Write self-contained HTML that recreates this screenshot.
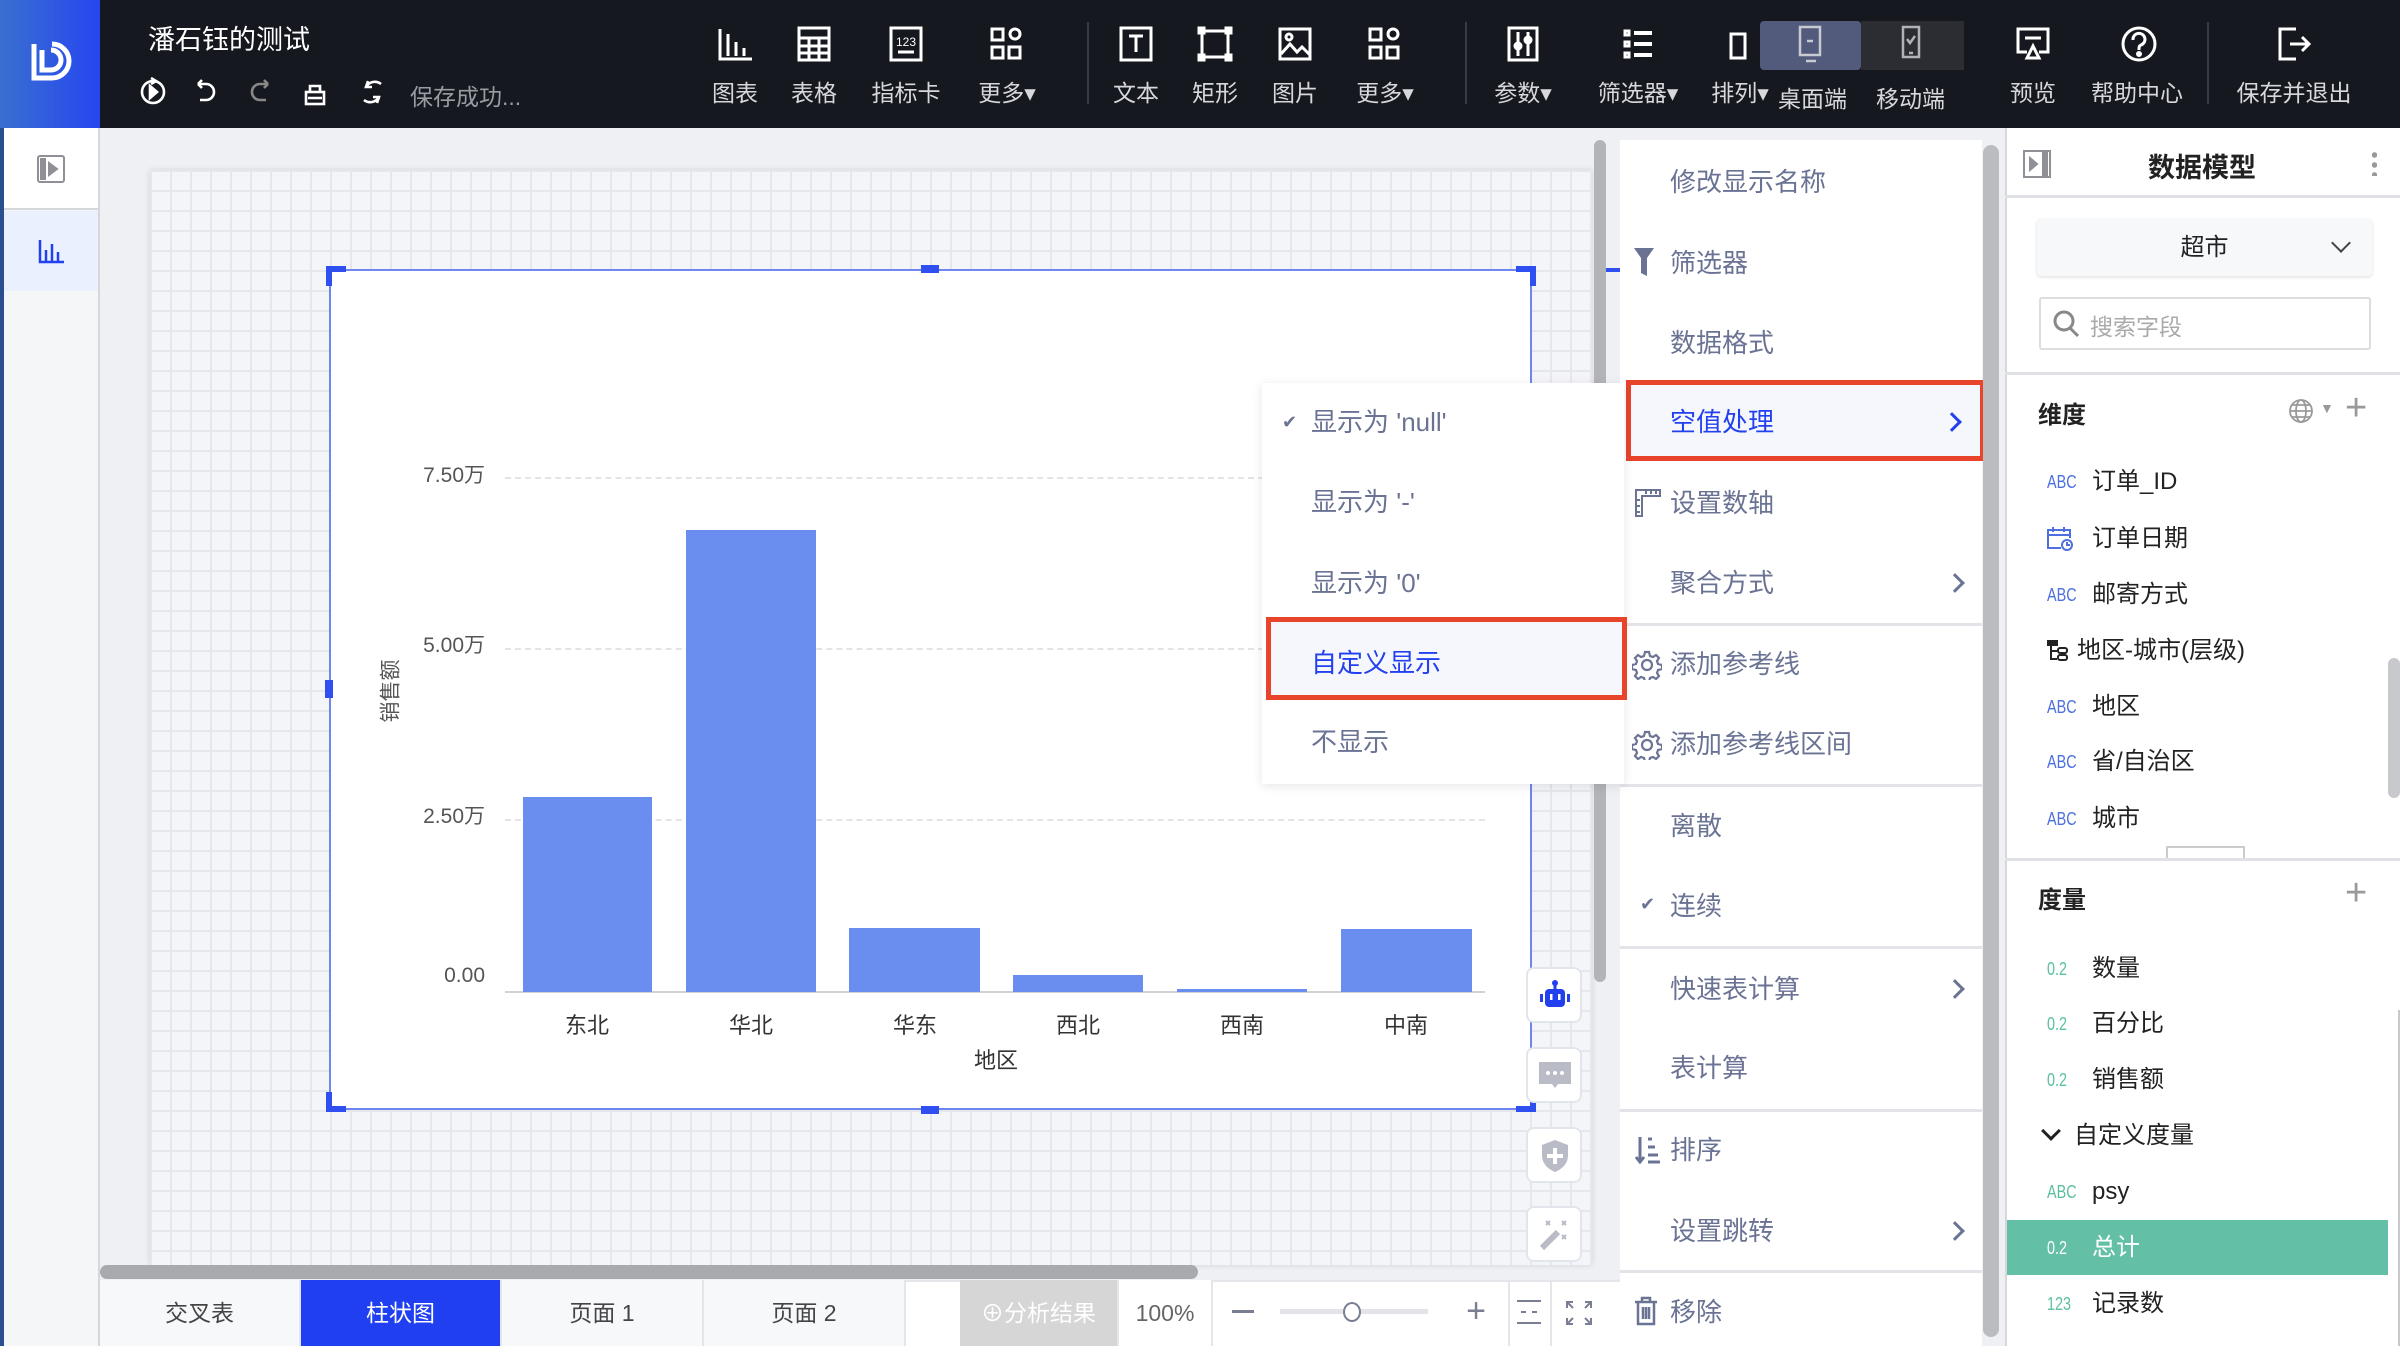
<!DOCTYPE html>
<html><head><meta charset="utf-8">
<style>
*{box-sizing:border-box;margin:0;padding:0}
body{width:2400px;height:1346px;overflow:hidden;position:relative;background:#eef0f4;font-family:"Liberation Sans","Noto Sans CJK SC",sans-serif}
.a{position:absolute}
.top{left:0;top:0;width:2400px;height:128px;background:#16181f}
.logo{left:0;top:0;width:100px;height:128px;background:linear-gradient(90deg,#3a6fd0,#2646f0)}
.tb{position:absolute;top:0;width:120px;margin-left:-60px;text-align:center;color:#d7d8dc;font-size:23px}
.tb svg{position:absolute;left:42px;top:26px}
.tb span{position:absolute;left:0;right:0;top:74px;white-space:nowrap}
.div{position:absolute;top:22px;width:2px;height:82px;background:#3a3c44}
.mi{position:absolute;left:1670px;font-size:26px;color:#6b7394;line-height:30px}
.hr{position:absolute;left:1620px;width:362px;height:3px;background:#e3e4e8}
.chev{position:absolute;left:1948px;width:14px;height:14px;border-right:3px solid #6b7394;border-top:3px solid #6b7394;transform:rotate(45deg)}
.si{position:absolute;left:1311px;font-size:26px;color:#6b7394;line-height:30px;z-index:5}
.ri{position:absolute;left:2092px;font-size:24px;color:#222;line-height:30px}
.ic{position:absolute;left:2047px;font-size:18px;color:#4d6fe0;line-height:30px;transform:scaleX(.8);transform-origin:left}
.icg{color:#5cc09e}
.yl{position:absolute;width:100px;left:385px;text-align:right;font-size:21px;color:#555;line-height:24px}
.xl{position:absolute;width:120px;text-align:center;font-size:22px;color:#333;top:1008px}
.bar{position:absolute;background:#6a8eef;bottom:354px}
.gl{position:absolute;left:505px;width:980px;border-top:2px dashed #e2e4e8}
.h{position:absolute;width:12px;height:12px;background:#2f4ff0}
.fb{position:absolute;left:1526px;width:56px;height:56px;background:#fff;border:2px solid #e3e5ec;border-radius:8px}
.tab{position:absolute;top:1280px;height:66px;line-height:66px;text-align:center;font-size:23px;color:#444;background:#f7f8fa;border-right:2px solid #e5e6ea}
</style></head><body>
<div class="a top"></div>
<div class="a logo"><svg class="a" style="left:28px;top:40px" width="44" height="44" viewBox="0 0 44 44" fill="none" stroke="#fff" stroke-width="5"><path d="M6 4v34h18a17 17 0 0 0 0-34"/><path d="M14 10v20h9a10 10 0 0 0 0-20"/></svg></div>
<div class="a" style="left:148px;top:18px;color:#fff;font-size:27px">潘石钰的测试</div>
<svg class="a" style="left:138px;top:74px" width="260" height="36" viewBox="0 0 260 36" fill="none" stroke="#fff" stroke-width="2.6">
<circle cx="15" cy="18" r="11"/><path d="M12 12l7 6-7 6z" fill="#fff"/><path d="M13 4l5 3-5 3"/>
<path d="M60 10h8a8 8 0 0 1 0 16h-6M60 10l4-4M60 10l4 4"/>
<path d="M130 10h-8a8 8 0 0 0 0 16h6M130 10l-4-4M130 10l-4 4" stroke="#888"/>
<rect x="168" y="18" width="18" height="12"/><path d="M172 18v-6h10v6M170 24h14"/>
<path d="M243 10a10 10 0 0 0-15 3M226 26a10 10 0 0 0 15-3M230 7l-2 6 6 0M239 29l2-6-6 0"/></svg>
<div class="a" style="left:410px;top:78px;color:#9a9ca3;font-size:23px">保存成功...</div>

<div class="tb" style="left:735px"><svg width="36" height="36" viewBox="0 0 36 36" fill="none" stroke="#fff" stroke-width="3"><path d="M3 3v30h32M11 8v22M19 16v14M27 22v8"/></svg><span>图表</span></div>
<div class="tb" style="left:814px"><svg width="36" height="36" viewBox="0 0 36 36" fill="none" stroke="#fff" stroke-width="3"><rect x="3" y="2" width="30" height="32"/><path d="M3 12h30M3 20h30M3 27h30M13 12v22M23 12v22"/></svg><span>表格</span></div>
<div class="tb" style="left:906px"><svg width="36" height="36" viewBox="0 0 36 36" fill="none" stroke="#fff" stroke-width="3"><rect x="3" y="2" width="30" height="32"/><path d="M10 26h16"/><text x="18" y="20" font-size="12" fill="#fff" stroke="none" text-anchor="middle" font-family="Liberation Sans">123</text></svg><span>指标卡</span></div>
<div class="tb" style="left:1007px"><svg width="36" height="36" viewBox="0 0 36 36" fill="none" stroke="#fff" stroke-width="3"><rect x="3" y="3" width="11" height="11"/><circle cx="26" cy="8" r="5"/><rect x="3" y="21" width="11" height="11"/><rect x="20" y="21" width="11" height="11"/></svg><span>更多▾</span></div>
<div class="div" style="left:1087px"></div>
<div class="tb" style="left:1136px"><svg width="36" height="36" viewBox="0 0 36 36" fill="none" stroke="#fff" stroke-width="3"><rect x="3" y="2" width="30" height="32"/><path d="M11 10h14M18 10v16"/></svg><span>文本</span></div>
<div class="tb" style="left:1215px"><svg width="36" height="36" viewBox="0 0 36 36" fill="none" stroke="#fff" stroke-width="3"><rect x="5" y="5" width="26" height="26"/><rect x="2" y="2" width="5" height="5"/><rect x="29" y="2" width="5" height="5"/><rect x="2" y="29" width="5" height="5"/><rect x="29" y="29" width="5" height="5"/></svg><span>矩形</span></div>
<div class="tb" style="left:1295px"><svg width="36" height="36" viewBox="0 0 36 36" fill="none" stroke="#fff" stroke-width="3"><rect x="3" y="3" width="30" height="30"/><path d="M4 28l9-10 7 8 5-5 8 8"/><circle cx="12" cy="11" r="3"/></svg><span>图片</span></div>
<div class="tb" style="left:1385px"><svg width="36" height="36" viewBox="0 0 36 36" fill="none" stroke="#fff" stroke-width="3"><rect x="3" y="3" width="11" height="11"/><circle cx="26" cy="8" r="5"/><rect x="3" y="21" width="11" height="11"/><rect x="20" y="21" width="11" height="11"/></svg><span>更多▾</span></div>
<div class="div" style="left:1465px"></div>
<div class="tb" style="left:1523px"><svg width="36" height="36" viewBox="0 0 36 36" fill="none" stroke="#fff" stroke-width="3"><rect x="4" y="2" width="28" height="32"/><path d="M13 6v24M23 6v24"/><circle cx="13" cy="20" r="3"/><circle cx="23" cy="14" r="3"/></svg><span>参数▾</span></div>
<div class="tb" style="left:1638px"><svg width="36" height="36" viewBox="0 0 36 36" fill="none" stroke="#fff" stroke-width="3"><rect x="5" y="5" width="4" height="4"/><rect x="5" y="16" width="4" height="4"/><rect x="5" y="27" width="4" height="4"/><path d="M14 7h18M14 18h18M14 29h18" stroke-width="4"/></svg><span>筛选器▾</span></div>
<div class="tb" style="left:1745px"><svg width="36" height="36" viewBox="0 0 36 36" fill="none" stroke="#fff" stroke-width="3"><rect x="4" y="8" width="14" height="24"/></svg><span style="left:-10px">排列▾</span></div>
<div class="a" style="left:1760px;top:21px;width:101px;height:49px;background:#535b7c;border-radius:4px"></div>
<div class="a" style="left:1861px;top:21px;width:103px;height:49px;background:#2c2d33"></div>
<svg class="a" style="left:1796px;top:25px" width="30" height="40" viewBox="0 0 30 40" fill="none" stroke="#c8cad2" stroke-width="2.5"><rect x="4" y="2" width="20" height="28"/><path d="M11 16h6M10 36h10"/></svg>
<svg class="a" style="left:1898px;top:25px" width="30" height="40" viewBox="0 0 30 40" fill="none" stroke="#b0b2ba" stroke-width="2.5"><rect x="5" y="2" width="16" height="30"/><path d="M9 14l3 4 5-7M11 28h4"/></svg>
<div class="a" style="left:1778px;top:80px;color:#d7d8dc;font-size:23px">桌面端</div>
<div class="a" style="left:1876px;top:80px;color:#d7d8dc;font-size:23px">移动端</div>
<div class="tb" style="left:2033px"><svg width="36" height="36" viewBox="0 0 36 36" fill="none" stroke="#fff" stroke-width="3"><path d="M12 26H3V3h30v23h-9"/><path d="M10 12h16"/><path d="M18 20l-6 12h12z"/></svg><span>预览</span></div>
<div class="tb" style="left:2137px"><svg width="40" height="40" viewBox="0 0 40 40" fill="none" stroke="#fff" stroke-width="3"><circle cx="20" cy="18" r="16"/><path d="M14 14a6 6 0 1 1 8 5c-2 1-2 2-2 5"/><circle cx="20" cy="28" r="1.5" fill="#fff"/></svg><span>帮助中心</span></div>
<div class="div" style="left:2207px"></div>
<div class="tb" style="left:2294px"><svg width="36" height="36" viewBox="0 0 36 36" fill="none" stroke="#fff" stroke-width="3"><path d="M20 3H4v30h16M14 18h18M26 11l7 7-7 7"/></svg><span>保存并退出</span></div>

<div class="a" style="left:0;top:128px;width:4px;height:1218px;background:#2b4e8f"></div>
<div class="a" style="left:4px;top:128px;width:96px;height:1218px;background:#f5f6f8;border-right:2px solid #d6d7db"></div>
<div class="a" style="left:4px;top:128px;width:94px;height:82px;background:#fff;border-bottom:2px solid #d6d7db"></div>
<svg class="a" style="left:37px;top:155px" width="28" height="28" viewBox="0 0 28 28" fill="none" stroke="#8e9096" stroke-width="2"><rect x="1" y="1" width="26" height="26" rx="2"/><rect x="4" y="4" width="4" height="20" fill="#8e9096"/><path d="M12 8l8 6-8 6z" fill="#8e9096"/></svg>
<div class="a" style="left:4px;top:211px;width:94px;height:80px;background:#eaf0fd"></div>
<svg class="a" style="left:38px;top:240px" width="26" height="24" viewBox="0 0 26 24" fill="none" stroke="#2240f0" stroke-width="2.5"><path d="M2 0v22h24M8 10v12M14 4v18M20 12v10"/></svg>

<div class="a" style="left:150px;top:170px;width:1442px;height:1095px;background-color:#f4f5f9;background-image:linear-gradient(#e6e7ec 2px,transparent 2px),linear-gradient(90deg,#e6e7ec 2px,transparent 2px);background-size:20px 20px;box-shadow:0 0 6px rgba(0,0,0,.12)"></div>
<div class="a" style="left:329px;top:269px;width:1203px;height:841px;background:#fff;border:2px solid #6f86f0"></div>
<div class="h" style="left:326px;top:266px;width:20px;height:6px"></div><div class="h" style="left:326px;top:266px;width:6px;height:20px"></div>
<div class="h" style="left:1516px;top:266px;width:20px;height:6px"></div><div class="h" style="left:1530px;top:266px;width:6px;height:20px"></div>
<div class="h" style="left:326px;top:1106px;width:20px;height:6px"></div><div class="h" style="left:326px;top:1092px;width:6px;height:20px"></div>
<div class="h" style="left:1516px;top:1106px;width:20px;height:6px"></div><div class="h" style="left:1530px;top:1092px;width:6px;height:20px"></div>
<div class="h" style="left:921px;top:265px;width:18px;height:8px"></div><div class="h" style="left:921px;top:1106px;width:18px;height:8px"></div>
<div class="h" style="left:325px;top:680px;width:8px;height:18px"></div><div class="h" style="left:1606px;top:268px;width:14px;height:4px"></div>

<div class="gl" style="top:477px"></div><div class="gl" style="top:648px"></div><div class="gl" style="top:819px"></div>
<div class="a" style="left:505px;top:991px;width:980px;height:2px;background:#d0d2d8"></div>
<div class="yl" style="top:464px">7.50万</div><div class="yl" style="top:634px">5.00万</div><div class="yl" style="top:805px">2.50万</div><div class="yl" style="top:964px">0.00</div>
<div class="a" style="left:358px;top:676px;font-size:21px;color:#555;transform:rotate(-90deg)">销售额</div>
<div class="bar" style="left:523px;width:129px;height:195px"></div>
<div class="bar" style="left:686px;width:130px;height:462px"></div>
<div class="bar" style="left:849px;width:131px;height:64px"></div>
<div class="bar" style="left:1013px;width:130px;height:17px"></div>
<div class="bar" style="left:1177px;width:130px;height:3px"></div>
<div class="bar" style="left:1341px;width:131px;height:63px"></div>
<div class="xl" style="left:527px">东北</div><div class="xl" style="left:691px">华北</div><div class="xl" style="left:855px">华东</div><div class="xl" style="left:1018px">西北</div><div class="xl" style="left:1182px">西南</div><div class="xl" style="left:1346px">中南</div>
<div class="xl" style="left:936px;top:1043px">地区</div>

<div class="fb" style="top:967px"><svg class="a" style="left:10px;top:10px" width="34" height="34" viewBox="0 0 34 34" fill="#2240f0"><circle cx="17" cy="4" r="3"/><rect x="15.5" y="5" width="3" height="6"/><rect x="7" y="10" width="20" height="18" rx="4"/><rect x="2" y="15" width="3" height="8"/><rect x="29" y="15" width="3" height="8"/><rect x="12" y="15" width="2.5" height="6" fill="#fff"/><rect x="20" y="15" width="2.5" height="6" fill="#fff"/></svg></div>
<div class="fb" style="top:1047px"><svg class="a" style="left:10px;top:12px" width="34" height="30" viewBox="0 0 34 30"><path d="M1 1h32v22H20l-3 4-3-4H1z" fill="#b9bbc6"/><circle cx="10" cy="12" r="2" fill="#fff"/><circle cx="17" cy="12" r="2" fill="#fff"/><circle cx="24" cy="12" r="2" fill="#fff"/></svg></div>
<div class="fb" style="top:1127px"><svg class="a" style="left:12px;top:10px" width="30" height="34" viewBox="0 0 30 34"><path d="M15 1l13 5v10c0 9-6 14-13 17C8 30 2 25 2 16V6z" fill="#b9bbc6"/><path d="M15 9v16M7 17h16" stroke="#fff" stroke-width="4"/></svg></div>
<div class="fb" style="top:1206px"><svg class="a" style="left:10px;top:10px" width="34" height="34" viewBox="0 0 34 34" stroke="#b9bbc6" fill="none" stroke-width="2"><path d="M4 30l16-16" stroke-width="6"/><path d="M8 3l4 4M12 3l-4 4M24 3l4 4M28 3l-4 4M24 17l4 4M28 17l-4 4"/></svg></div>

<div class="a" style="left:1594px;top:140px;width:12px;height:842px;background:#b3b4b8;border-radius:6px"></div>
<div class="a" style="left:100px;top:1265px;width:1098px;height:14px;background:#a9aaad;border-radius:7px"></div>

<div class="a" style="left:100px;top:1280px;width:1520px;height:66px;background:#fff;border-top:2px solid #e5e6ea"></div>
<div class="tab" style="left:100px;width:201px">交叉表</div>
<div class="tab" style="left:301px;width:201px;background:#1f3ff0;color:#fff">柱状图</div>
<div class="tab" style="left:502px;width:202px">页面 1</div>
<div class="tab" style="left:704px;width:202px">页面 2</div>
<div class="tab" style="left:960px;width:159px;background:#d6d6d6;color:#fff">⊕分析结果</div>
<div class="tab" style="left:1119px;width:94px;background:#fff;color:#666">100%</div>
<div class="a" style="left:1232px;top:1310px;width:22px;height:3px;background:#7a7e92"></div>
<div class="a" style="left:1280px;top:1309px;width:148px;height:5px;background:#e3e4ea"></div>
<div class="a" style="left:1343px;top:1302px;width:18px;height:20px;border:2px solid #7a7e92;border-radius:50%;background:#fff"></div>
<div class="a" style="left:1463px;top:1299px;width:26px;height:26px;font-size:34px;line-height:24px;color:#7a7e92;text-align:center">+</div>
<div class="a" style="left:1508px;top:1280px;width:2px;height:66px;background:#e5e6ea"></div>
<svg class="a" style="left:1515px;top:1298px" width="28" height="28" viewBox="0 0 28 28" stroke="#7a7e92" stroke-width="2" fill="none"><path d="M2 3h24M2 25h24M6 14h5M17 14h5"/></svg>
<div class="a" style="left:1550px;top:1280px;width:2px;height:66px;background:#e5e6ea"></div>
<svg class="a" style="left:1565px;top:1300px" width="28" height="26" viewBox="0 0 28 26" stroke="#7a7e92" stroke-width="2" fill="none"><path d="M2 8V2h6M2 2l6 6M26 8V2h-6M26 2l-6 6M2 18v6h6M2 24l6-6M26 18v6h-6M26 24l-6-6"/></svg>

<div class="a" style="left:1620px;top:140px;width:362px;height:1206px;background:#fff"></div>
<div class="mi" style="top:167px">修改显示名称</div>
<svg class="a" style="left:1634px;top:248px" width="20" height="30" viewBox="0 0 20 30" fill="#6b7394"><path d="M0 0h20l-7 10v18l-6 -3V10z"/></svg>
<div class="mi" style="top:248px">筛选器</div>
<div class="mi" style="top:328px">数据格式</div>
<div class="a" style="left:1626px;top:380px;width:359px;height:81px;background:#f5f7fc;border:5px solid #e8432b"></div>
<div class="mi" style="top:407px;color:#2240f0">空值处理</div>
<div class="chev" style="top:415px;border-color:#2240f0;left:1945px"></div>
<svg class="a" style="left:1634px;top:488px" width="28" height="30" viewBox="0 0 28 30" fill="none" stroke="#6b7394" stroke-width="2"><path d="M2 2h24v6H8v20H2z"/><path d="M2 12h4M2 18h4M2 24h4M12 2v4M17 2v4M22 2v4"/></svg>
<div class="mi" style="top:488px">设置数轴</div>
<div class="mi" style="top:568px">聚合方式</div><div class="chev" style="top:576px"></div>
<div class="hr" style="top:623px"></div>
<svg class="a" style="left:1632px;top:650px" width="30" height="30" viewBox="0 0 30 30" fill="none" stroke="#6b7394" stroke-width="2.2"><circle cx="15" cy="15" r="5"/><path d="M13 2h4l1 4 3 1 3-2 3 3-2 3 1 3 4 1v4l-4 1-1 3 2 3-3 3-3-2-3 1-1 4h-4l-1-4-3-1-3 2-3-3 2-3-1-3-4-1v-4l4-1 1-3-2-3 3-3 3 2 3-1z"/></svg>
<div class="mi" style="top:649px">添加参考线</div>
<svg class="a" style="left:1632px;top:730px" width="30" height="30" viewBox="0 0 30 30" fill="none" stroke="#6b7394" stroke-width="2.2"><circle cx="15" cy="15" r="5"/><path d="M13 2h4l1 4 3 1 3-2 3 3-2 3 1 3 4 1v4l-4 1-1 3 2 3-3 3-3-2-3 1-1 4h-4l-1-4-3-1-3 2-3-3 2-3-1-3-4-1v-4l4-1 1-3-2-3 3-3 3 2 3-1z"/></svg>
<div class="mi" style="top:729px">添加参考线区间</div>
<div class="hr" style="top:784px"></div>
<div class="mi" style="top:811px">离散</div>
<div class="a" style="left:1640px;top:894px;font-size:18px;color:#6b7394">✔</div>
<div class="mi" style="top:891px">连续</div>
<div class="hr" style="top:946px"></div>
<div class="mi" style="top:974px">快速表计算</div><div class="chev" style="top:982px"></div>
<div class="mi" style="top:1053px">表计算</div>
<div class="hr" style="top:1109px"></div>
<svg class="a" style="left:1635px;top:1135px" width="26" height="30" viewBox="0 0 26 30" fill="none" stroke="#6b7394" stroke-width="3"><path d="M5 2v24M1 22l4 5 4-5M13 4h4M13 12h7M13 20h10M13 27h12"/></svg>
<div class="mi" style="top:1135px">排序</div>
<div class="mi" style="top:1216px">设置跳转</div><div class="chev" style="top:1224px"></div>
<div class="hr" style="top:1270px"></div>
<svg class="a" style="left:1634px;top:1296px" width="24" height="30" viewBox="0 0 24 30" fill="none" stroke="#6b7394" stroke-width="2.5"><path d="M1 6h22M8 6V2h8v4M4 6v22h16V6M9 11v12M12 11v12M15 11v12"/></svg>
<div class="mi" style="top:1297px">移除</div>
<div class="a" style="left:1983px;top:145px;width:16px;height:1192px;background:#bbbcbf;border-radius:8px"></div>

<!-- null submenu (on top) -->
<div class="a" style="left:1262px;top:383px;width:362px;height:401px;background:#fff;box-shadow:0 2px 10px rgba(0,0,0,.1);z-index:4"></div>
<div class="a" style="left:1282px;top:412px;font-size:18px;color:#6b7394;z-index:5">✔</div>
<div class="si" style="top:407px">显示为 'null'</div>
<div class="si" style="top:487px">显示为 '-'</div>
<div class="si" style="top:568px">显示为 '0'</div>
<div class="a" style="left:1266px;top:617px;width:361px;height:83px;background:#f5f7fc;border:5px solid #e8432b;z-index:4"></div>
<div class="si" style="top:648px;color:#2240f0">自定义显示</div>
<div class="si" style="top:727px">不显示</div>

<div class="a" style="left:2005px;top:128px;width:395px;height:1218px;background:#fff;border-left:2px solid #d6d7db"></div>
<svg class="a" style="left:2023px;top:150px" width="28" height="28" viewBox="0 0 28 28" fill="none" stroke="#8e9096" stroke-width="2"><rect x="1" y="1" width="26" height="26"/><rect x="20" y="3" width="4" height="22" fill="#8e9096"/><path d="M7 8l7 6-7 6z" fill="#8e9096"/></svg>
<div class="a" style="left:2148px;top:146px;font-size:27px;font-weight:bold;color:#222">数据模型</div>
<div class="a" style="left:2372px;top:150px;width:5px;height:26px;background:radial-gradient(circle,#999 2.5px,transparent 3px) 0 0/5px 10px"></div>
<div class="a" style="left:2005px;top:195px;width:395px;height:3px;background:#e0e1e5"></div>
<div class="a" style="left:2037px;top:219px;width:335px;height:57px;background:#f7f8fa;border-radius:4px;box-shadow:0 1px 3px rgba(0,0,0,.15);text-align:center;line-height:57px;font-size:24px;color:#222">超市</div>
<div class="a" style="left:2334px;top:236px;width:14px;height:14px;border-right:2px solid #444;border-bottom:2px solid #444;transform:rotate(45deg)"></div>
<div class="a" style="left:2039px;top:297px;width:332px;height:53px;border:2px solid #dcdde1;border-radius:3px"></div>
<svg class="a" style="left:2052px;top:309px" width="30" height="30" viewBox="0 0 30 30" fill="none" stroke="#888" stroke-width="3"><circle cx="12" cy="12" r="9"/><path d="M18 19l8 8"/></svg>
<div class="a" style="left:2090px;top:308px;font-size:23px;color:#aaa">搜索字段</div>
<div class="a" style="left:2005px;top:372px;width:395px;height:3px;background:#e0e1e5"></div>
<div class="a" style="left:2038px;top:395px;font-size:24px;font-weight:bold;color:#222">维度</div>
<svg class="a" style="left:2288px;top:398px" width="26" height="26" viewBox="0 0 26 26" fill="none" stroke="#999" stroke-width="1.8"><circle cx="13" cy="13" r="11"/><ellipse cx="13" cy="13" rx="5" ry="11"/><path d="M2 13h22M4 7h18M4 19h18"/></svg>
<div class="a" style="left:2320px;top:400px;font-size:14px;color:#999">▼</div>
<div class="a" style="left:2345px;top:388px;font-size:38px;color:#999;line-height:40px">+</div>
<div class="ic" style="top:467px">ABC</div><div class="ri" style="top:467px">订单_ID</div>
<svg class="a" style="left:2047px;top:526px" width="26" height="26" viewBox="0 0 26 26" fill="none" stroke="#4d6fe0" stroke-width="2"><path d="M14 22H1V4h22v8"/><path d="M1 9h22M6 1v5M17 1v5"/><circle cx="20" cy="19" r="5"/><path d="M20 16v3h3"/></svg><div class="ri" style="top:524px">订单日期</div>
<div class="ic" style="top:580px">ABC</div><div class="ri" style="top:580px">邮寄方式</div>
<svg class="a" style="left:2047px;top:640px" width="22" height="22" viewBox="0 0 22 22" fill="none" stroke="#222" stroke-width="2"><rect x="0" y="0" width="10" height="5" fill="#222"/><path d="M4 5v14h6M4 11h6"/><rect x="11" y="8" width="9" height="5" rx="2"/><rect x="11" y="15" width="9" height="5" rx="2"/></svg><div class="ri" style="top:636px;left:2077px">地区-城市(层级)</div>
<div class="ic" style="top:692px">ABC</div><div class="ri" style="top:692px">地区</div>
<div class="ic" style="top:747px">ABC</div><div class="ri" style="top:747px">省/自治区</div>
<div class="ic" style="top:804px">ABC</div><div class="ri" style="top:804px">城市</div>
<div class="a" style="left:2166px;top:846px;width:79px;height:12px;border:2px solid #ccc;border-bottom:none"></div>
<div class="a" style="left:2005px;top:858px;width:395px;height:3px;background:#e0e1e5"></div>
<div class="a" style="left:2388px;top:658px;width:12px;height:140px;background:#c8c9cd;border-radius:6px"></div>
<div class="a" style="left:2038px;top:880px;font-size:24px;font-weight:bold;color:#222">度量</div>
<div class="a" style="left:2345px;top:873px;font-size:38px;color:#999;line-height:40px">+</div>
<div class="ic icg" style="top:954px">0.2</div><div class="ri" style="top:954px">数量</div>
<div class="ic icg" style="top:1009px">0.2</div><div class="ri" style="top:1009px">百分比</div>
<div class="ic icg" style="top:1065px">0.2</div><div class="ri" style="top:1065px">销售额</div>
<div class="a" style="left:2044px;top:1124px;width:14px;height:14px;border-right:3px solid #222;border-bottom:3px solid #222;transform:rotate(45deg)"></div><div class="ri" style="top:1121px;left:2074px">自定义度量</div>
<div class="ic icg" style="top:1177px">ABC</div><div class="ri" style="top:1177px">psy</div>
<div class="a" style="left:2007px;top:1220px;width:381px;height:55px;background:#63bfa5"></div>
<div class="ic" style="top:1233px;color:#fff">0.2</div><div class="ri" style="top:1233px;color:#fff">总计</div>
<div class="ic icg" style="top:1289px">123</div><div class="ri" style="top:1289px">记录数</div>
<div class="a" style="left:2398px;top:1010px;width:2px;height:336px;background:#c8c9cd"></div>
</body></html>
